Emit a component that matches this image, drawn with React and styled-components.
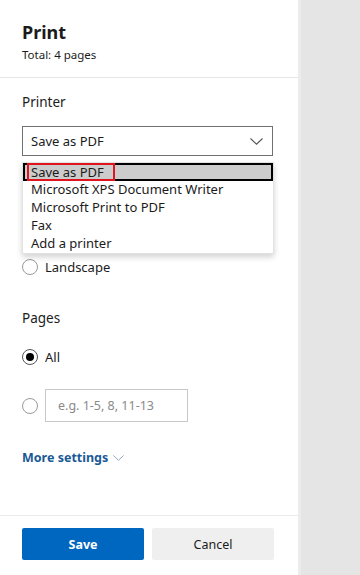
import React from "react";
import styled, { createGlobalStyle } from "styled-components";

const Global = createGlobalStyle`
  html, body { margin: 0; padding: 0; }
  body {
    font-family: "Noto Sans", "Open Sans", sans-serif;
    color: #1b1b1b;
    background: #e6e6e6;
  }
  * { box-sizing: border-box; }
`;

const Page = styled.div`
  display: flex;
  width: 360px;
  height: 575px;
  overflow: hidden;
`;

const Panel = styled.div`
  width: 298px;
  height: 100%;
  background: #fff;
  display: flex;
  flex-direction: column;
`;

const Side = styled.div`
  flex: 1;
  background: #e5e5e5;
  border-left: 3px solid #ececec;
`;

const Header = styled.div`
  padding: 20px 22px 14px;
  border-bottom: 1px solid #e6e6e6;
`;

const Title = styled.h1`
  margin: 0;
  font-size: 18px;
  line-height: 24px;
  font-weight: 700;
`;

const Sub = styled.div`
  margin-top: 3px;
  font-size: 11.5px;
  line-height: 16px;
`;

const Content = styled.div`
  padding: 14px 25px 0 22px;
  display: flex;
  flex-direction: column;
`;

const Label = styled.div`
  font-size: 13.5px;
  line-height: 20px;
  margin-top: ${(p) => p.$mt || 0}px;
  visibility: ${(p) => (p.$covered ? "hidden" : "visible")};
`;

const SelectWrap = styled.div`
  position: relative;
  margin-top: 14px;
`;

const Select = styled.div`
  height: 30px;
  border: 1px solid #707070;
  display: flex;
  align-items: center;
  justify-content: space-between;
  padding: 0 9px 0 8px;
  font-size: 13px;
`;

const Menu = styled.ul`
  position: absolute;
  top: 36px;
  left: 0;
  width: 252px;
  margin: 0;
  padding: 0;
  list-style: none;
  background: #fff;
  border: 1px solid #e2e2e2;
  box-shadow: 0 3px 6px rgba(0, 0, 0, 0.18);
  z-index: 2;
`;

const Item = styled.li`
  position: relative;
  height: 18px;
  line-height: 16px;
  font-size: 13px;
  padding: 0 8px;
  ${(p) =>
    p.$active &&
    `background: #cccccc; border: 2px solid #000; padding: 0 6px; line-height: 14px;`}
`;

const Annotation = styled.span`
  position: absolute;
  left: 2px;
  top: -2px;
  width: 88px;
  height: 18px;
  border: 2px solid #e0141e;
`;

const RadioRow = styled.div`
  display: flex;
  align-items: center;
  gap: 7px;
  margin-top: ${(p) => p.$mt || 0}px;
  font-size: 13px;
  line-height: 20px;
  visibility: ${(p) => (p.$covered ? "hidden" : "visible")};
`;

const Radio = styled.span`
  width: 16px;
  height: 16px;
  border-radius: 50%;
  border: 1px solid ${(p) => (p.$on ? "#555" : "#9a9a9a")};
  display: inline-flex;
  align-items: center;
  justify-content: center;
  flex: none;
  &::after {
    content: "";
    display: ${(p) => (p.$on ? "block" : "none")};
    width: 8px;
    height: 8px;
    border-radius: 50%;
    background: #000;
  }
`;

const RangeInput = styled.div`
  width: 143px;
  height: 33px;
  border: 1px solid #c8c8c8;
  display: flex;
  align-items: center;
  padding-left: 12px;
  font-size: 12.5px;
  color: #8a8a8a;
`;

const More = styled.div`
  margin-top: 26px;
  display: flex;
  align-items: center;
  gap: 5px;
  font-size: 12.5px;
  line-height: 20px;
  font-weight: 700;
  color: #1a5996;
`;

const Footer = styled.div`
  margin-top: auto;
  border-top: 1px solid #eaeaea;
  padding: 12px 22px 15px;
  display: flex;
  gap: 8px;
`;

const Button = styled.button`
  width: 122px;
  height: 32px;
  border: none;
  border-radius: 2px;
  font-family: inherit;
  font-size: 12.5px;
  font-weight: ${(p) => (p.$primary ? 700 : 400)};
  background: ${(p) => (p.$primary ? "#0067c0" : "#efefef")};
  color: ${(p) => (p.$primary ? "#fff" : "#1b1b1b")};
`;

const Chevron = ({ color = "#555", w = 13, h = 7 }) => (
  <svg width={w} height={h} viewBox="0 0 13 7" fill="none">
    <path d="M0.5 0.5 L6.5 6.2 L12.5 0.5" stroke={color} strokeWidth="1.1" />
  </svg>
);

const printers = [
  "Save as PDF",
  "Microsoft XPS Document Writer",
  "Microsoft Print to PDF",
  "Fax",
  "Add a printer",
];

export default function App() {
  return (
    <>
      <Global />
      <Page>
        <Panel>
          <Header>
            <Title>Print</Title>
            <Sub>Total: 4 pages</Sub>
          </Header>
          <Content>
            <Label>Printer</Label>
            <SelectWrap>
              <Select>
                <span>Save as PDF</span>
                <Chevron />
              </Select>
              <Menu>
                {printers.map((p, i) => (
                  <Item key={p} $active={i === 0}>
                    {p}
                    {i === 0 && <Annotation />}
                  </Item>
                ))}
              </Menu>
            </SelectWrap>
            <Label $mt={26} $covered>
              Layout
            </Label>
            <RadioRow $mt={19} $covered>
              <Radio $on />
              Portrait
            </RadioRow>
            <RadioRow $mt={16}>
              <Radio />
              Landscape
            </RadioRow>
            <Label $mt={31}>Pages</Label>
            <RadioRow $mt={19}>
              <Radio $on />
              All
            </RadioRow>
            <RadioRow $mt={22}>
              <Radio />
              <RangeInput>e.g. 1-5, 8, 11-13</RangeInput>
            </RadioRow>
            <More>
              More settings
              <Chevron color="#8aa3bd" w={11} h={6} />
            </More>
          </Content>
          <Footer>
            <Button $primary>Save</Button>
            <Button>Cancel</Button>
          </Footer>
        </Panel>
        <Side />
      </Page>
    </>
  );
}
